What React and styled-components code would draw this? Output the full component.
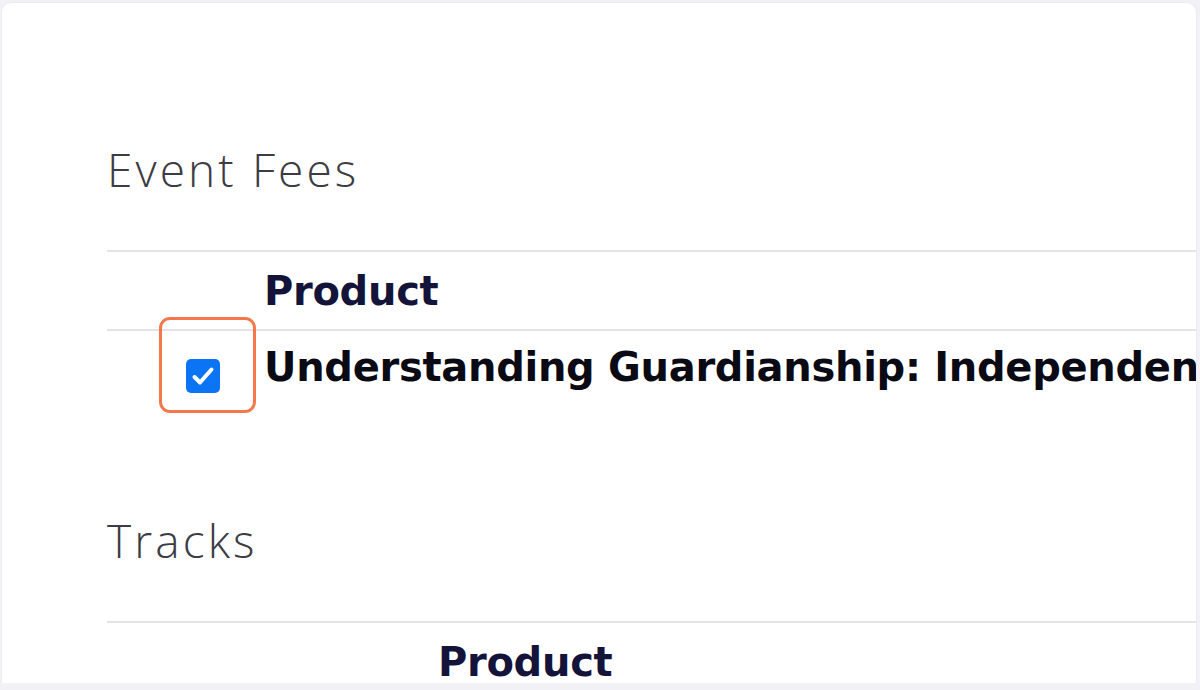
import styled, { createGlobalStyle } from "styled-components";

const GlobalStyle = createGlobalStyle`
    html, body {
        margin: 0;
        padding: 0;
        background: #f2f2f6;
    }
`

function CheckBox({ checked }) {
    return (
        <BoxWrap>
            <Box checked={checked}>
                {checked && (
                    <svg width="34" height="34" viewBox="0 0 34 34" fill="none">
                        <path d="M8.5 18l5.5 5.5L25.5 10.5" stroke="#fff" strokeWidth="4" strokeLinecap="round" strokeLinejoin="round" />
                    </svg>
                )}
            </Box>
            <Highlight />
        </BoxWrap>
    )
}

export default function App() {
    return (
        <>
            <GlobalStyle />
            <Card>
                <Section>
                    <Title top={138}>Event Fees</Title>
                    <Table>
                        <colgroup>
                            <col width={157} />
                            <col />
                        </colgroup>
                        <thead>
                            <tr>
                                <HeadCell></HeadCell>
                                <HeadCell>Product</HeadCell>
                            </tr>
                        </thead>
                        <tbody>
                            <tr>
                                <BodyCell>
                                    <CheckBox checked />
                                </BodyCell>
                                <BodyCell>Understanding Guardianship: Independence and Alternatives</BodyCell>
                            </tr>
                        </tbody>
                    </Table>
                </Section>
                <Section>
                    <Title top={88}>Tracks</Title>
                    <Table>
                        <colgroup>
                            <col width={331} />
                            <col />
                        </colgroup>
                        <thead>
                            <tr>
                                <HeadCell></HeadCell>
                                <HeadCell>Product</HeadCell>
                            </tr>
                        </thead>
                    </Table>
                </Section>
            </Card>
        </>
    )
}

const Card = styled.div`
    margin: 2px 0 0 1px;
    width: 1196px;
    height: 681px;
    box-sizing: border-box;
    background: #ffffff;
    border: 1px solid #ebebf1;
    border-bottom: none;
    border-radius: 10px 10px 0 0;
    overflow: hidden;
    padding-left: 105px;
`
const Section = styled.div`
    display: flex;
    flex-direction: column;
`
const Title = styled.h2`
    margin: ${props => props.top}px 0 53px 0;
    font-family: "Open Sans", "Liberation Sans", sans-serif;
    font-weight: 300;
    font-size: 46px;
    line-height: 56px;
    letter-spacing: 3.1px;
    color: #3c3c44;
    height: 56px;
`
const Table = styled.table`
    border-collapse: collapse;
    table-layout: fixed;
    width: 1300px;
    font-family: "DejaVu Sans", "Liberation Sans", sans-serif;
    font-weight: bold;
    font-size: 40px;
    letter-spacing: -0.3px;
    white-space: nowrap;
`
const HeadCell = styled.th`
    text-align: left;
    padding: 0;
    height: 77px;
    color: #14143a;
    border-top: 2px solid #e4e4e4;
    border-bottom: 2px solid #e4e4e4;
`
const BodyCell = styled.td`
    padding: 0;
    height: 80px;
    color: #0a0a14;
    vertical-align: top;
    padding-top: 13px;
`
const BoxWrap = styled.div`
    position: relative;
    width: 34px;
    height: 34px;
    margin: 15px 0 0 79px;
`
const Box = styled.div`
    width: 34px;
    height: 34px;
    border-radius: 5px;
    background: ${props => props.checked ? "#0b74f4" : "#ffffff"};
    display: flex;
    align-items: center;
    justify-content: center;
`
const Highlight = styled.div`
    position: absolute;
    left: -27px;
    top: -42px;
    width: 97px;
    height: 96px;
    box-sizing: border-box;
    border: 3.5px solid #f5784a;
    border-radius: 11px;
`
